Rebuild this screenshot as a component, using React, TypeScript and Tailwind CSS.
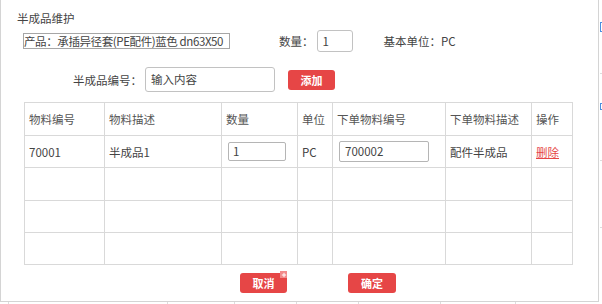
import { Plus } from 'lucide-react'

const font = { fontFamily: '"Noto Sans CJK SC", "Noto Sans", sans-serif' }

const cols = [80, 117, 76, 35, 113, 86, 41]
const heads = ['物料编号', '物料描述', '数量', '单位', '下单物料编号', '下单物料描述', '操作']

function Cell({ children, h }: { children?: React.ReactNode; h: number }) {
  return (
    <td className="border border-[#d9d9d9] px-[4px] align-middle" style={{ height: h }}>
      {children}
    </td>
  )
}

export default function App() {
  return (
    <div className="relative w-[602px] h-[304px] overflow-hidden bg-white text-[11.5px] leading-[16px] text-[#444]" style={font}>
      {/* page behind the dialog */}
      <div className="absolute right-0 top-[22px] w-[2px] h-[10px] border-l border-y border-[#4a8fe0]" />
      <div className="absolute right-0 top-[103px] w-[2px] h-[7px] border-l border-y border-[#4a8fe0]" />
      <div className="absolute right-0 top-[73px] w-[2px] h-px bg-[#ddd]" />
      <div className="absolute right-0 top-[160px] w-[2px] h-px bg-[#ddd]" />
      <div className="absolute right-0 top-[227px] w-[2px] h-px bg-[#ddd]" />
      {[8, 167, 234, 296, 358, 440, 515].map(x => (
        <div key={x} className="absolute bottom-0 w-px h-[2px] bg-[#ddd]" style={{ left: x }} />
      ))}

      {/* dialog */}
      <div className="w-[599px] h-[302px] border-x border-b border-[#d4d4d4] bg-white">
        <div className="pl-[16px] pt-[10px]">半成品维护</div>

        <div className="flex items-center h-[22px] mt-[4px]">
          <div className="ml-[22px] w-[207px] h-[16px] border border-[#a6a6a6] leading-[14px] whitespace-nowrap tracking-[-0.4px]">
            产品：承插异径套(PE配件)蓝色 dn63X50
          </div>
          <span className="ml-[49px]">数量：</span>
          <div className="ml-[3px] w-[36px] h-[22px] border border-[#c2c2c2] rounded-[3px] pl-[5px] leading-[20px]">1</div>
          <span className="ml-[31px]">基本单位：PC</span>
        </div>

        <div className="flex items-center h-[25px] mt-[15px]">
          <span className="ml-[72px] w-[72px]">半成品编号：</span>
          <div className="w-[130px] h-[25px] border border-[#c2c2c2] rounded-[3px] pl-[5px] leading-[23px]">输入内容</div>
          <button className="ml-[13px] w-[47px] h-[20px] rounded-[3px] bg-[#e64646] text-white text-[11px] font-bold leading-[20px]">
            添加
          </button>
        </div>

        <table className="ml-[23px] mt-[10px] table-fixed border-collapse w-[548px]">
          <colgroup>
            {cols.map((w, i) => <col key={i} style={{ width: w }} />)}
          </colgroup>
          <tbody>
            <tr className="text-[#555]">
              {heads.map(h => <Cell key={h} h={33}>{h}</Cell>)}
            </tr>
            <tr>
              <Cell h={32}>70001</Cell>
              <Cell h={32}>半成品1</Cell>
              <Cell h={32}>
                <div className="ml-[2px] w-[58px] h-[19px] border border-[#b5b5b5] rounded-[2px] pl-[4px] leading-[17px]">1</div>
              </Cell>
              <Cell h={32}>PC</Cell>
              <Cell h={32}>
                <div className="ml-[2px] w-[90px] h-[21px] border border-[#b5b5b5] rounded-[2px] pl-[5px] leading-[19px]">700002</div>
              </Cell>
              <Cell h={32}>配件半成品</Cell>
              <Cell h={32}><span className="text-[#e64646] underline">删除</span></Cell>
            </tr>
            {[33, 32, 32].map((h, r) => (
              <tr key={r}>
                {cols.map((_, i) => <Cell key={i} h={h} />)}
              </tr>
            ))}
          </tbody>
        </table>

        <div className="flex mt-[8px]">
          <button className="relative ml-[239px] w-[47px] h-[20px] rounded-[3px] bg-[#e64646] text-white text-[11px] font-bold leading-[20px]">
            取消
            <span className="absolute -top-[2px] right-0 w-[7px] h-[7px] bg-[#f28a8a] flex items-center justify-center">
              <Plus className="w-[6px] h-[6px] text-white" strokeWidth={4} />
            </span>
          </button>
          <button className="ml-[61px] w-[48px] h-[20px] rounded-[3px] bg-[#e64646] text-white text-[11px] font-bold leading-[20px]">
            确定
          </button>
        </div>
      </div>
    </div>
  )
}
